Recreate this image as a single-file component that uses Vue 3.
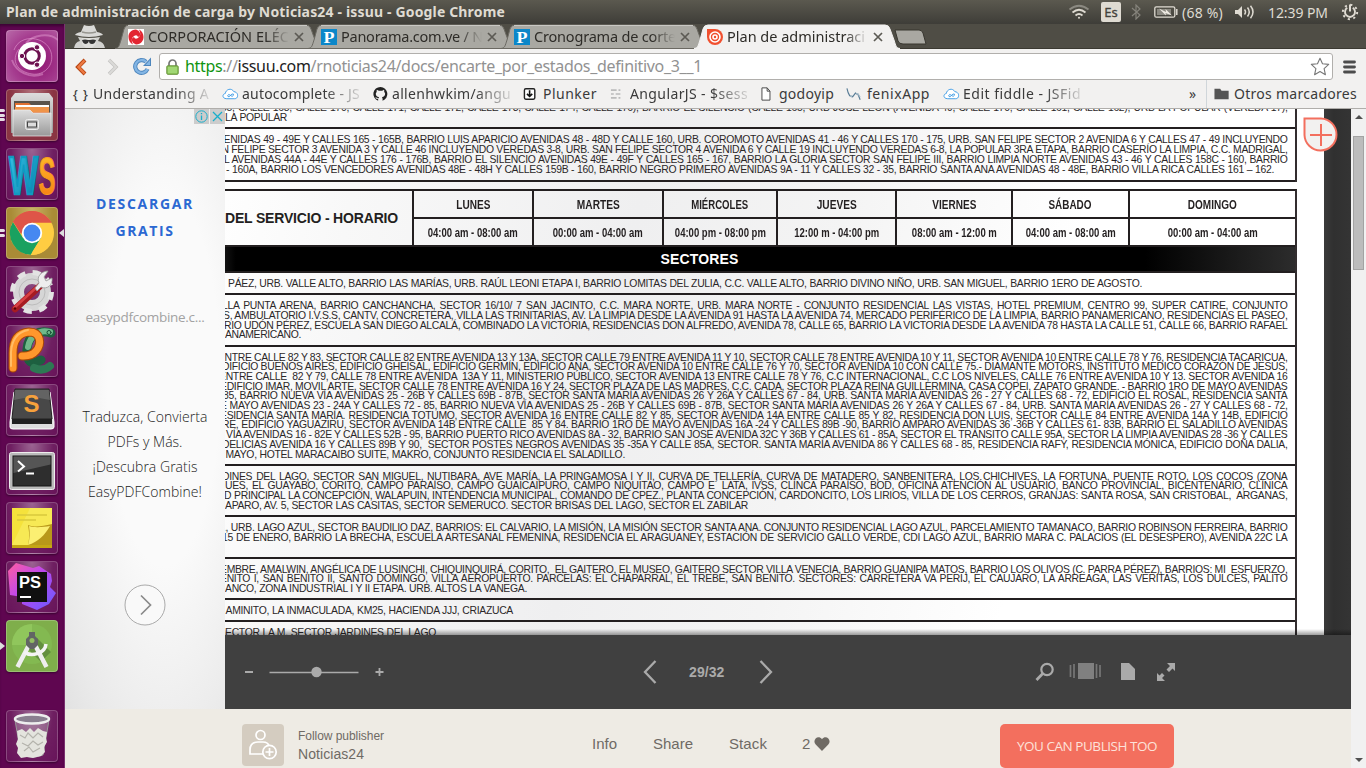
<script setup>
// Makes a line of text take exactly the given width: by letter spacing,
// by word spacing (.words) or by condensing the glyphs (.scale).
const vFit = {
  mounted(el, { value, modifiers }) {
    if (!value) return
    const natural = el.getBoundingClientRect().width
    const n = el.textContent.length
    if (modifiers.scale) {
      el.style.transform = `scaleX(${value / natural})`
      return
    }
    if (modifiers.words) {
      const base = -0.3
      const gaps = el.textContent.split(' ').length - 1
      const rest = value - natural - base * n
      const ws = Math.max(rest / gaps, -0.6)
      el.style.wordSpacing = ws + 'px'
      el.style.letterSpacing = (value - natural - ws * gaps) / n + 'px'
      return
    }
    el.style.letterSpacing = (value - natural) / n + 'px'
  },
}

const tabs = [
  { title: 'CORPORACIÓN ELÉC', w: 141, icon: 'corpo' },
  { title: 'Panorama.com.ve / N', w: 142, icon: 'pan' },
  { title: 'Cronograma de corte', w: 142, icon: 'pan' },
  { title: 'Plan de administraci', w: 138, icon: 'issuu', active: true },
]

const days = [
  ['LUNES', '04:00 am - 08:00 am', 34, 90],
  ['MARTES', '00:00 am - 04:00 am', 43, 90],
  ['MIÉRCOLES', '04:00 pm - 08:00 pm', 57, 91],
  ['JUEVES', '12:00 m - 04:00 pm', 40, 85],
  ['VIERNES', '08:00 am - 12:00 m', 44, 85],
  ['SÁBADO', '04:00 am - 08:00 am', 43, 90],
  ['DOMINGO', '00:00 am - 04:00 am', 49, 90],
]

// Each line: text, left edge and right edge inside the page column.
const R = 1062.5
const before = [
  { k: 'a', lines: [
    ['65, CALLE 168, CALLE 170, CALLE 171, CALLE 172, CALLE 173, CALLE 174, CALLE 176), BARRIO EL SILENCIO (CALLE 165, URB JOSÉ LEÓN (AVENIDA 49, CALLE 170, CALLE 161, CALLE 162), URB LA POPULAR (VEREDA 17),', -4, R],
    ['LA POPULAR', 0, 62],
  ] },
  { k: 'b', lines: [
    ['ENIDAS 49 - 49E Y CALLES 165 - 165B, BARRIO LUIS APARICIO AVENIDAS 48 - 48D Y CALLE 160, URB. COROMOTO AVENIDAS 41 - 46 Y CALLES 170 - 175, URB. SAN FELIPE SECTOR 2 AVENIDA 6 Y CALLES 47 - 49 INCLUYENDO', -1.5, R],
    ['N FELIPE SECTOR 3 AVENIDA 3 Y CALLE 46 INCLUYENDO VEREDAS 3-8, URB. SAN FELIPE SECTOR 4 AVENIDA 6 Y CALLE 19 INCLUYENDO VEREDAS 6-8, LA POPULAR 3RA ETAPA, BARRIO CASERÍO LA LIMPIA, C.C. MADRIGAL,', -3.5, R],
    ['L AVENIDAS 44A - 44E Y CALLES 176 - 176B, BARRIO EL SILENCIO AVENIDAS 49E - 49F Y CALLES 165 - 167, BARRIO LA GLORIA SECTOR SAN FELIPE III, BARRIO LIMPIA NORTE AVENIDAS 43 - 46 Y CALLES 158C - 160, BARRIO', -1, R],
    ['- 160A, BARRIO LOS VENCEDORES AVENIDAS 48E - 48H Y CALLES 159B - 160, BARRIO NEGRO PRIMERO AVENIDAS 9A - 11 Y CALLES 32 - 35, BARRIO SANTA ANA AVENIDAS 48 - 48E, BARRIO VILLA RICA CALLES 161 – 162.', 1, 1049],
  ] },
]
const after = [
  { k: 'c', lines: [
    ['PÁEZ, URB. VALLE ALTO, BARRIO LAS MARÍAS, URB. RAÚL LEONI ETAPA I, BARRIO LOMITAS DEL ZULIA, C.C. VALLE ALTO, BARRIO DIVINO NIÑO, URB. SAN MIGUEL, BARRIO 1ERO DE AGOSTO.', 3, 917],
  ] },
  { k: 'd', lines: [
    ['LLA PUNTA ARENA, BARRIO CANCHANCHA, SECTOR 16/10/ 7 SAN JACINTO, C.C. MARA NORTE, URB. MARA NORTE - CONJUNTO RESIDENCIAL LAS VISTAS, HOTEL PREMIUM, CENTRO 99, SUPER CATIRE, CONJUNTO', -3, R],
    ['S, AMBULATORIO I.V.S.S, CANTV, CONCRETERA, VILLA LAS TRINITARIAS, AV. LA LIMPIA DESDE LA AVENIDA 91 HASTA LA AVENIDA 74, MERCADO PERIFÉRICO DE LA LIMPIA, BARRIO PANAMERICANO, RESIDENCIAS EL PASEO,', -2, R],
    ['RIO UDÓN PÉREZ, ESCUELA SAN DIEGO ALCALÁ, COMBINADO LA VICTORIA, RESIDENCIAS DON ALFREDO, AVENIDA 78, CALLE 65, BARRIO LA VICTORIA DESDE LA AVENIDA 78 HASTA LA CALLE 51, CALLE 66, BARRIO RAFAEL', -1, R],
    ['ANAMERICANO.', 0, 76],
  ] },
  { k: 'e', lines: [
    ['NTRE CALLE 82 Y 83, SECTOR CALLE 82 ENTRE AVENIDA 13 Y 13A, SECTOR CALLE 79 ENTRE AVENIDA 11 Y 10, SECTOR CALLE 78 ENTRE AVENIDA 10 Y 11, SECTOR AVENIDA 10 ENTRE CALLE 78 Y 76, RESIDENCIA TACARICUA,', -0.5, R],
    ['DIFICIO BUENOS AIRES, EDIFICIO GHEISAL, EDIFICIO GERMÍN, EDIFICIO ANA, SECTOR AVENIDA 10 ENTRE CALLE 76 Y 70, SECTOR AVENIDA 10 CON CALLE 75.- DIAMANTE MOTORS, INSTITUTO MEDICO CORAZÓN DE JESÚS,', -3, R],
    ['ENTRE CALLE  82 Y 79, CALLE 78 ENTRE AVENIDA  13A Y 11, MINISTERIO PÚBLICO, SECTOR AVENIDA 13 ENTRE CALLE 78 Y 76, C.C INTERNACIONAL, C.C LOS NIVELES, CALLE 76 ENTRE AVENIDA 10 Y 13. SECTOR AVENIDA 16', -6, R],
    ['EDIFICIO IMAR, MOVIL ARTE, SECTOR CALLE 78 ENTRE AVENIDA 16 Y 24, SECTOR PLAZA DE LAS MADRES, C.C. CADA, SECTOR PLAZA REINA GUILLERMINA, CASA COPEI, ZAPATO GRANDE. - BARRIO 1RO DE MAYO AVENIDAS', -5, R],
    ['85, BARRIO NUEVA VÍA AVENIDAS 25 - 26B Y CALLES 69B - 87B, SECTOR SANTA MARÍA AVENIDAS 26 Y 26A Y CALLES 67 - 84, URB. SANTA MARÍA AVENIDAS 26 - 27 Y CALLES 68 - 72, EDIFICIO EL ROSAL, RESIDENCIA SANTA', -2, R],
    ['E MAYO AVENIDAS 23 - 24A Y CALLES 72 - 85, BARRIO NUEVA VÍA AVENIDAS 25 - 26B Y CALLES 69B - 87B, SECTOR SANTA MARÍA AVENIDAS 26 Y 26A Y CALLES 67 - 84, URB. SANTA MARÍA AVENIDAS 26 - 27 Y CALLES 68 - 72,', -5, R],
    ['ESIDENCIA SANTA MARÍA. RESIDENCIA TOTUMO, SECTOR AVENIDA 16 ENTRE CALLE 82 Y 85, SECTOR AVENIDA 14A ENTRE CALLE 85 Y 82, RESIDENCIA DON LUIS, SECTOR CALLE 84 ENTRE AVENIDA 14A Y 14B, EDIFICIO', -5, R],
    ['RE, EDIFICIO YAGUAZIRU, SECTOR AVENIDA 14B ENTRE CALLE  85 Y 84. BARRIO 1RO DE MAYO AVENIDAS 16A -24 Y CALLES 89B -90, BARRIO AMPARO AVENIDAS 36 -36B Y CALLES 61- 83B, BARRIO EL SALADILLO AVENIDAS', -3, R],
    ['VÍA AVENIDAS 16 - 82E Y CALLES 52B - 95, BARRIO PUERTO RICO AVENIDAS 8A - 32, BARRIO SAN JOSÉ AVENIDA 32C Y 36B Y CALLES 61 - 85A, SECTOR EL TRÁNSITO CALLE 95A, SECTOR LA LIMPIA AVENIDAS 28 -36 Y CALLES', 1, R],
    ['DELICIAS AVENIDA 16 Y CALLES 89B Y 90,  SECTOR POSTES NEGROS AVENIDAS 35 -35A Y CALLE 85A, SECTOR. SANTA MARÍA AVENIDA 86 Y CALLES 68 - 85, RESIDENCIA RAFY, RESIDENCIA MÓNICA, EDIFICIO DOÑA DALIA,', -3, R],
    ['MAYO, HOTEL MARACAIBO SUITE, MAKRO, CONJUNTO RESIDENCIA EL SALADILLO.', 0.5, 400],
  ] },
  { k: 'f', lines: [
    ['DINES DEL LAGO, SECTOR SAN MIGUEL, NUTIBARA, AVE MARÍA, LA PRINGAMOSA I Y II, CURVA DE TELLERÍA, CURVA DE MATADERO, SANBENITERA, LOS CHICHIVES, LA FORTUNA, PUENTE ROTO, LOS COCOS (ZONA', -3, R],
    ['UES, EL GUAYABO, CORITO, CAMPO PARAÍSO, CAMPO GUAICAIPURO, CAMPO NIQUITAO, CAMPO E´ LATA, IVSS, CLÍNCA PARAÍSO, BOD, OFICINA ATENCIÓN AL USUARIO, BANCO PROVINCIAL, BICENTENARIO, CLÍNICA', 0, R],
    ['D PRINCIPAL LA CONCEPCIÓN, WALAPUIN, INTENDENCIA MUNICIPAL, COMANDO DE CPEZ., PLANTA CONCEPCIÓN, CARDONCITO, LOS LIRIOS, VILLA DE LOS CERROS, GRANJAS: SANTA ROSA, SAN CRISTOBAL,  ARGANAS,', -1, R],
    ['APARO, AV. 5, SECTOR LAS CASITAS, SECTOR SEMERUCO. SECTOR BRISAS DEL LAGO, SECTOR EL ZABILAR', 0, 523],
  ] },
  { k: 'g', lines: [
    ['., URB. LAGO AZUL, SECTOR BAUDILIO DAZ, BARRIOS: EL CALVARIO, LA MISIÓN, LA MISIÓN SECTOR SANTA ANA. CONJUNTO RESIDENCIAL LAGO AZUL, PARCELAMIENTO TAMANACO, BARRIO ROBINSON FERREIRA, BARRIO', -2, R],
    ['15 DE ENERO, BARRIO LA BRECHA, ESCUELA ARTESANAL FEMENINA, RESIDENCIA EL ARAGUANEY, ESTACIÓN DE SERVICIO GALLO VERDE, CDI LAGO AZUL, BARRIO MARA C. PALACIOS (EL DESESPERO), AVENIDA 22C LA', -3, R],
  ] },
  { k: 'h', lines: [
    ['EMBRE, AMALWIN, ANGÉLICA DE LUSINCHI, CHIQUINQUIRÁ, CORITO,  EL GAITERO, EL MUSEO, GAITERO SECTOR VILLA VENECIA, BARRIO GUANIPA MATOS, BARRIO LOS OLIVOS (C. PARRA PÉREZ), BARRIOS: MI  ESFUERZO,', -5, R],
    ['ENITO I, SAN BENITO II, SANTO DOMINGO, VILLA AEROPUERTO. PARCELAS: EL CHAPARRAL, EL TREBE, SAN BENITO. SECTORES: CARRETERA VA PERIJ, EL CAUJARO, LA ARREAGA, LAS VERITAS, LOS DULCES, PALITO', -5, R],
    ['ANCO, ZONA INDUSTRIAL I Y II ETAPA. URB. ALTOS LA VANEGA.', 0, 302],
  ] },
  { k: 'i', lines: [['AMINITO, LA INMACULADA, KM25, HACIENDA JJJ, CRIAZUCA', 0.5, 288]] },
  { k: 'j', lines: [['ECTOR LA M, SECTOR JARDINES DEL LAGO', 0, 211]] },
]
</script>

<template>
  <div class="desk">
    <!-- system panel -->
    <header class="panel">
      <span v-fit="499" class="wtitle">Plan de administración de carga by Noticias24 - issuu - Google Chrome</span>
      <div class="tray">
        <svg width="22" height="16" viewBox="0 0 22 16" fill="none" stroke="#dfdbd2" stroke-width="1.7">
          <path d="M1.5 5.5Q11-2 20.500 5.500" stroke="#8b8981" /><path d="M4.500 8.500Q11 3 17.500 8.500" /><path d="M7.500 11.500Q11 8.500 14.500 11.500" /><circle cx="11" cy="13.800" r="1" fill="#dfdbd2" stroke="none" />
        </svg>
        <b class="es">Es</b>
        <svg class="bt" width="10" height="16" viewBox="0 0 10 16" fill="none" stroke="#85837b" stroke-width="1.200"><path d="M1 4l8 7-4 4V1l4 4-8 7" /></svg>
        <svg class="bat" width="24" height="12" viewBox="0 0 24 12" fill="none" stroke="#dfdbd2" stroke-width="1.300">
          <rect x=".8" y=".8" width="20" height="10.400" rx="1.500" /><path d="M22.800 3v6" stroke-width="1.500" /><rect x="3" y="3" width="14" height="6" fill="#8b8981" stroke="none" /><path d="M5 2.500L12 6l-.5-3L18 9.500 11.500 7l.5 2.500z" fill="#eeeae2" stroke="none" />
        </svg>
        <span v-fit="41" class="pct">(68 %)</span>
        <svg class="vol" width="20" height="14" viewBox="0 0 20 14" fill="none" stroke="#dfdbd2" stroke-width="1.500"><path d="M0 5h3l4-4v12L3 9H0z" fill="#dfdbd2" stroke="none" /><path d="M9.500 4.500q2 2.500 0 5M12.500 2.500q3.500 4.500 0 9M15.500 .8q5 6.200 0 12.400" /></svg>
        <span v-fit="60" class="clock">12:39 PM</span>
        <svg class="gear" width="18" height="18" viewBox="0 0 18 18" fill="none" stroke="#dfdbd2"><circle cx="9" cy="9" r="7.200" stroke-width="1.900" stroke-dasharray="2.200 3.450" /><path d="M6.200 4.800a5 5 0 1 0 5.600 0" stroke-width="1.900" /><path d="M9 1.500v7" stroke-width="2" /></svg>
      </div>
    </header>

    <div class="main">
      <!-- launcher -->
      <nav class="launcher">
        <div class="tile t-ubuntu">
          <svg viewBox="0 0 52 52"><path d="M8 20C14 3 40 6 45 22c4 14-8 24-19 22-14-2-22-13-13-25" fill="none" stroke="#e9a5d8" stroke-opacity=".55" /><path d="M52 10C43 2 27 5 20 13M6 30c4 12 18 19 31 14" fill="none" stroke="#e9a5d8" stroke-opacity=".45" stroke-width="2" /><circle cx="26" cy="26" r="14" fill="#fff" /><circle cx="26" cy="26" r="7.300" fill="none" stroke="#6d1150" stroke-width="3" /><g fill="#6d1150" stroke="#fff"><circle cx="16" cy="26" r="2.700" /><circle cx="31" cy="17.300" r="2.700" /><circle cx="31" cy="34.700" r="2.700" /></g></svg>
        </div>
        <div class="tile t-files"><i class="pip p1"></i><i class="pip p2"></i><i class="pip p3"></i>
          <svg viewBox="0 0 52 52"><defs><linearGradient id="cab" x2="0" y2="1"><stop stop-color="#ddd" /><stop offset="1" stop-color="#999" /></linearGradient></defs><path d="M9 4h34l4 5v35H5V9z" fill="url(#cab)" /><path d="M8 12h36v12H8z" fill="#5a534b" /><path d="M9 14h14l2 2h18v8H9z" fill="#e27131" /><path d="M10 16h33v2H10z" fill="#fff" /><path d="M9 18h34v5H9z" fill="#ef9449" /><path d="M7 21h17l3 3h18v23H7z" fill="url(#cab)" stroke="#eee" stroke-width=".7" /><rect x="19.500" y="30.500" width="13" height="10" rx="2" fill="#bbb" stroke="#eee" /><rect x="21.500" y="33" width="9" height="5" fill="#ddd" stroke="#444" /></svg>
        </div>
        <div class="tile">
          <svg viewBox="0 0 52 52"><defs><linearGradient id="wb" x2="1" y2="1"><stop stop-color="#3ac9ea" /><stop offset="1" stop-color="#0579a8" /></linearGradient><linearGradient id="wo" x2="0" y2="1"><stop stop-color="#ffc52c" /><stop offset="1" stop-color="#f57811" /></linearGradient></defs><text x="3" y="45.500" font-size="54" font-weight="bold" textLength="29" lengthAdjust="spacingAndGlyphs" fill="url(#wb)" stroke="#0e9bc2" stroke-width="2.500">W</text><text x="32.500" y="45.500" font-size="52" font-weight="bold" textLength="17" lengthAdjust="spacingAndGlyphs" fill="url(#wo)" stroke="#f99b20">S</text></svg>
        </div>
        <div class="tile t-chrome"><i class="pip p4"></i><i class="pip p5"></i><i class="arrow-r"></i>
          <svg viewBox="0 0 52 52"><circle cx="26" cy="26" r="22" fill="#ffcd42" /><path d="M26 26L6.900 15A22 22 0 0 1 45 15H26z" fill="#de5548" /><path d="M26 26v22A22 22 0 0 1 6.900 15L17 31z" fill="#1aa160" /><path d="M24.500 48L35 31 26 26 16 31z" fill="#1aa160" /><path d="M24.500 48L35 31l1-14h9.500A22 22 0 0 1 24.500 48z" fill="#ffcd42" /><path d="M26 15.800h19.800l-3-4A22 22 0 0 0 7 14.800L15 27z" fill="#de5548" /><circle cx="26" cy="26" r="10.200" fill="#fff" /><circle cx="26" cy="26" r="8.400" fill="#4688f1" /></svg>
        </div>
        <div class="tile">
          <svg viewBox="0 0 52 52"><circle cx="26" cy="26" r="13.500" fill="none" stroke="#d6d6d6" stroke-width="11" /><circle cx="26" cy="26" r="19.500" fill="none" stroke="#e3e3e3" stroke-width="5" stroke-dasharray="8 7.320" /><circle cx="26" cy="26" r="13" fill="none" stroke="#bcbcbc" /><path d="M34 20L9 43" stroke="#a61b22" stroke-width="6.500" stroke-linecap="round" /><path d="M32 20L8.500 41.500" stroke="#d84144" stroke-width="2.500" stroke-linecap="round" /><path d="M29 22l4-5c-3-7 3-12 9-12l-4 6 2 4 6-3c1 7-5 12-11 9l-4 4z" fill="#eee" stroke="#999" stroke-width=".8" /><circle cx="9" cy="42.500" r="1.200" fill="#500" /></svg>
        </div>
        <div class="tile">
          <svg viewBox="0 0 52 52" fill="none" stroke-linecap="round"><path d="M45 8C33 4 22 10 21 24s5 16 14 11" stroke="#1d6040" stroke-width="9" /><path d="M44 7C33 4 24 11 22 22" stroke="#6fb98a" stroke-width="6" /><path d="M28 43q9 4 16-2" stroke="#2d7953" stroke-width="8" /><path d="M7 43V28C7 14 13 8 23 7c12 0 13 12 7 19-5 6-12 5-14 5" stroke="#a64606" stroke-width="9" /><path d="M7 43V28C7 14 13 8 23 7c12 0 13 12 7 19-5 6-12 5-14 5" stroke="#ff972d" stroke-width="7" /><path d="M5 41V27C6 13 12 7 22 5" stroke="#ffbd66" stroke-width="2" /><circle cx="43" cy="7.500" r="2" fill="#6fb98a" stroke="#174d35" /></svg>
        </div>
        <div class="tile">
          <svg viewBox="0 0 52 52"><path d="M8 8h36l4 30v5q0 2-3 2H7q-3 0-3-2v-5z" fill="#ddd" stroke="#fff" /><path d="M9 5h34l3 30H6z" fill="#484848" stroke="#222" /><path d="M6 35h40v5H6z" fill="#202020" /><path d="M9 6h34l1 10q-19-5-36 0z" fill="#777" opacity=".6" /><text x="17.500" y="28" font-size="24" font-weight="bold" textLength="16" lengthAdjust="spacingAndGlyphs" fill="#f6a13c">S</text></svg>
        </div>
        <div class="tile">
          <svg viewBox="0 0 52 52"><rect x="3.500" y="9.500" width="45" height="37" rx="2" fill="#bbb" stroke="#eee" /><rect x="7" y="13" width="38" height="30" fill="#2e2e2e" stroke="#151515" /><path d="M7.500 13.500h37v8L7.500 30z" fill="#555" /><path d="M12 18l6 5.500-6 5M20 30.500h8" fill="none" stroke="#fff" stroke-width="2" /></svg>
        </div>
        <div class="tile">
          <svg viewBox="0 0 52 52"><path d="M6 8h40v38H6z" fill="#c5a614" /><path d="M6 6h40v37H6z" fill="#f7e955" /><path d="M6 6h18L6 43z" fill="#f4dc24" opacity=".5" /><path d="M11 13h30M11 18h19" stroke="#d9c93d" stroke-width="1.500" /><path d="M22 43c2-8 1-14 0-20 8 3 14 1 24-1v21z" fill="#b8981a" /><path d="M22 43c2-6 2-13 1-19 6 2 14 1 21 0C39 33 32 40 22 43z" fill="#fbef72" /></svg>
        </div>
        <div class="tile">
          <svg viewBox="0 0 52 52"><defs><linearGradient id="ps" x1="0" x2="1" y1="0" y2="1"><stop stop-color="#ff5ea0" /><stop offset=".45" stop-color="#bd47ef" /><stop offset="1" stop-color="#635cff" /></linearGradient></defs><path d="M2 10L10 2l17 5 6-2 12 8 1 7-2 6 6 6-7 11-12 6-15-6v-7L4 34z" fill="url(#ps)" /><rect x="11" y="11" width="30" height="30" fill="#101010" /><text x="13" y="26.500" font-size="16" font-weight="bold" textLength="22" lengthAdjust="spacingAndGlyphs" fill="#fff">PS</text><path d="M14 36h11" stroke="#fff" stroke-width="2" /></svg>
        </div>
        <div class="tile t-android"><i class="arrow-l"></i>
          <svg viewBox="0 0 52 52"><circle cx="26" cy="24" r="20" fill="#83b951" /><path d="M6 25a20 20 0 0 1 20-21v21z" fill="#90c65c" /><path d="M31 18l14 14-10 10-13-13z" fill="#638f3f" /><path d="M23 25L11.500 47M29 25l11.500 22" stroke="#eee" stroke-width="4.500" /><path d="M18 32c7 5 21 2 22-8" fill="none" stroke="#f4f4f4" stroke-width="3.500" /><path d="M23 12h6v4l3 3v6l-4 4h-4l-4-4v-6l3-3z" fill="#626564" /><circle cx="26" cy="20.500" r="2.500" fill="#93be62" /></svg>
        </div>
        <div class="tile t-trash">
          <svg viewBox="0 0 52 52"><path d="M9 10l6 35q11 4 22 0l6-35" fill="#ccc" fill-opacity=".3" stroke="#999" /><path d="M11 21l5-2 4 3 4-4 4 4 4-4 5 3 4 1-1 6 1 4-3 5 1 5-4 4-8 2-6-1-6 1-4-5 1-5-2-4 2-5z" fill="#e4e4de" /><path d="M14 25l5 3 3-5 5 5 5-5 5 4M16 33l6 3 5-5 5 4 5-3M18 41l5-4 4 5 7-4" fill="none" stroke="#b4b3ac" stroke-width="1.200" /><ellipse cx="26" cy="9" rx="17" ry="4.500" fill="#8a7f90" stroke="#eee" stroke-width="2.500" /></svg>
        </div>
      </nav>

      <div class="browser">
        <div class="tabstrip">
          <svg class="incog" width="36" height="24" viewBox="0 0 36 24"><path d="M10 8l3-7q5 2 10 0l3 7q5 1 6 3-14 4-28 0 1-2 6-3z" fill="#d9d9d7" /><path d="M11 8q7 2 14 0" stroke="#96958f" stroke-width="1.500" fill="none" /><path d="M3 24q1-6 6-7l-2-4q11 2 22 0l-2 4q6 1 7 7z" fill="#d2d2cf" /><path d="M11 14h14v6l-4 4h-6l-4-4z" fill="#dededb" /><path d="M11 16q3-1 6 0h2q3-1 6 0-1 4-4 4-3 0-3-3-1 3-3 3-3 0-4-4z" fill="#333" /></svg>
          <div v-for="t in tabs" :key="t.title" class="tab" :class="{ active: t.active }">
            <svg class="tabshape" width="206" height="25" viewBox="0 0 206 25"><path d="M0 24.500C4 24 4 22 6 16L9 5Q10 1 14 1H191Q195 1 196 5L200 16C202 22 202 24 206 24.500z" :fill="t.active ? '#f2f1f0' : '#a9a8a2'" :stroke="t.active ? '#f2f1f0' : '#6b6962'" /><path v-if="!t.active" d="M13 1.500H192" stroke="#c9c8c4" /></svg>
            <svg v-if="t.icon === 'corpo'" class="fav" viewBox="0 0 16 16"><path d="M0 0h16v16H0z" fill="#fff" /><path d="M8 .5C-2 1-1 13 5 15.500q-3-6 1-8.500 3-2 4 1 3-1 2-4-1-3-4-3.500z" fill="#e32631" /><path d="M8 15.500c10-.5 9-12.500 3-15q3 6-1 8.500-3 2-4-1-3 1-2 4 1 3 4 3.500z" fill="#e32631" /></svg>
            <svg v-else-if="t.icon === 'pan'" class="fav" viewBox="0 0 16 16"><path d="M0 0h16v16H0z" fill="#0b87c9" /><text x="2.500" y="14" font-family="Liberation Serif" font-weight="bold" font-size="17" textLength="11" lengthAdjust="spacingAndGlyphs" fill="#fff">P</text></svg>
            <svg v-else class="fav" viewBox="0 0 16 16"><path d="M0 0h8a8 8 0 1 1-8 8z" fill="#f1502f" /><circle cx="8" cy="8" r="5" fill="none" stroke="#fff" stroke-width="1.600" /><circle cx="8" cy="8" r="2" fill="none" stroke="#fff" stroke-width="1.600" /></svg>
            <div class="tt"><span v-fit="t.w">{{ t.title }}</span></div>
            <svg class="x" width="10" height="10" viewBox="0 0 10 10" stroke="#5c5a54" stroke-width="1.700"><path d="M1 1l8 8M9 1L1 9" /></svg>
          </div>
          <svg class="newtab" width="33" height="16" viewBox="0 0 33 16"><path d="M1 1h24q3 0 4 3l3 11H9q-4 0-5-3z" fill="#a9a8a2" stroke="#38362f" /></svg>
        </div>

        <div class="toolbar">
          <svg class="back" width="12" height="18" viewBox="0 0 12 18" fill="none"><path d="M10 2L3 9l7 7" stroke="#b94613" stroke-width="4" /><path d="M9.500 2.500L3.500 9l6 6.500" stroke="#ed7a43" stroke-width="2.400" /></svg>
          <svg class="fwd" width="12" height="18" viewBox="0 0 12 18" fill="none"><path d="M2 2l7 7-7 7" stroke="#c4c3c1" stroke-width="3.500" /><path d="M2 2l7 7-7 7" stroke="#dbdad8" stroke-width="2" /></svg>
          <svg class="reload" width="19" height="19" viewBox="0 0 19 19" fill="none"><path d="M14.500 12A6.400 6.400 0 1 1 13 4.800" stroke="#4d86bd" stroke-width="4.200" /><path d="M18 .5V9H10z" fill="#4d86bd" /><path d="M14.500 12A6.400 6.400 0 1 1 13 4.800" stroke="#83b5e4" stroke-width="2.400" /><path d="M17 3v5h-4.500z" fill="#83b5e4" /></svg>
          <div class="omni">
            <svg width="13" height="16" viewBox="0 0 13 16"><path d="M3 8V4.500a3.500 3.500 0 0 1 7 0V8" fill="none" stroke="#777" stroke-width="1.700" /><rect x=".8" y="6.800" width="11.400" height="8.500" rx="1" fill="#8ecb5c" stroke="#68913c" /><path d="M2 9h9M2 11h9M2 13h9" stroke="#b5e48e" /></svg>
            <span v-fit="517" class="url"><span class="sec">https</span>://<span class="host">issuu.com</span>/rnoticias24/docs/encarte_por_estados_definitivo_3__1</span>
            <svg class="star" width="20" height="19" viewBox="0 0 20 19"><path d="M10 1.200l2.500 5.600 6.200.6-4.600 4.200 1.300 6.100-5.400-3.200-5.400 3.200 1.300-6.100L1.300 7.400l6.200-.6z" fill="#fff" stroke="#777" stroke-width="1.100" stroke-linejoin="round" /></svg>
          </div>
          <svg class="menu" width="13" height="14" viewBox="0 0 13 14" stroke="#4c4c4c" stroke-width="2.800" stroke-linecap="round"><path d="M1.500 2h10M1.500 7h10M1.500 12h10" /></svg>
        </div>

        <div class="marks">
          <div class="mk"><b class="braces">{ }</b><span v-fit="116" class="fade">Understanding A</span></div>
          <div class="mk"><svg class="ic" viewBox="0 0 18 16"><path d="M5 13C0 13 0 8 3.500 7.500 4 3 10 1 12.500 5.500 18 6 17.500 13 13.500 13z" fill="#fff" stroke="#3f9ce5" /><path d="M6 9.500q1-2 3 0t3 0-1.500-1.500L7.500 11Q6 11 6 9.500z" fill="none" stroke="#3f9ce5" /></svg><span v-fit="118" class="fade">autocomplete - JS</span></div>
          <div class="mk"><svg class="ic" viewBox="0 0 18 16"><path d="M9 .5a7.500 7.500 0 0 0-2.500 14.600v-2Q4 13.500 3.500 11.500l2 .5q.5.800 1.500.4l.5-1Q4 11 4 7.500l1-2q-.4-1 .2-2l2 1h3.500l2-1q.5 1 .2 2l1 2q0 3.500-3.400 3.900.7.600.7 2v1.700A7.500 7.500 0 0 0 9 .5z" fill="#222" /></svg><span v-fit="119" class="fade">allenhwkim/angu</span></div>
          <div class="mk"><svg class="ic" viewBox="0 0 18 16"><rect x="1.500" y="2.500" width="11" height="11" rx="1.500" fill="#fff" stroke="#222" stroke-width="1.500" /><path d="M7 4v6M4.200 7.800L7 10.500l2.800-2.700" fill="none" stroke="#111" stroke-width="1.700" /></svg><span v-fit="54">Plunker</span></div>
          <div class="mk"><svg class="ic" viewBox="0 0 18 16"><path d="M1 4h6m2 0h2M1 8h3m2 0h5M1 12h6m2 0h2" stroke="#bbb" stroke-width="1.800" /></svg><span v-fit="118" class="fade">AngularJS - $sess</span></div>
          <div class="mk"><svg class="ic ic18" viewBox="0 0 18 16"><path d="M1 1.500h5.500l3 3.500v9.500H1z" fill="#fff" stroke="#444" /><path d="M6.500 1.500V5h3" fill="none" stroke="#444" /></svg><span v-fit="55">godoyip</span></div>
          <div class="mk"><svg class="ic ic22" viewBox="0 0 18 16"><path d="M1 2q1 5 3 8l3 1 3-4 3 2 2 5" fill="none" stroke="#567a94" stroke-width="1.200" /><path d="M4 10l3-1-1 3zM10 7l3 0 3 5" fill="#a8bcc9" /></svg><span v-fit="63">fenixApp</span></div>
          <div class="mk"><svg class="ic" viewBox="0 0 18 16"><path d="M5 13C0 13 0 8 3.500 7.500 4 3 10 1 12.500 5.500 18 6 17.500 13 13.500 13z" fill="#fff" stroke="#3f9ce5" /><path d="M6 9.500q1-2 3 0t3 0-1.500-1.500L7.500 11Q6 11 6 9.500z" fill="none" stroke="#3f9ce5" /></svg><span v-fit="118" class="fade">Edit fiddle - JSFid</span></div>
          <div class="mk more"><span>»</span></div>
          <div class="mk others"><svg class="ic" viewBox="0 0 18 16"><path d="M.5 2.500h6l1.500 2h7.500v9H.5z" fill="#555" /></svg><span v-fit="123">Otros marcadores</span></div>
        </div>

        <div class="view">
          <div class="web">
            <div class="upper">
              <aside class="ad">
                <div class="adbtns">
                  <svg width="15" height="15" viewBox="0 0 15 15" fill="none" stroke="#19aecb"><circle cx="7.500" cy="7.500" r="5.700" /><path d="M7.500 6.500V11M7.500 4v1.200" stroke-width="1.300" /></svg>
                  <svg width="15" height="15" viewBox="0 0 15 15" stroke="#19aecb" stroke-width="1.300"><path d="M3 3l9 9M12 3l-9 9" /></svg>
                </div>
                <div class="cta"><span v-fit="98">DESCARGAR</span><br /><span v-fit="59">GRATIS</span></div>
                <div class="site"><span v-fit="119">easypdfcombine.c...</span></div>
                <div class="copy"><span v-fit="125">Traduzca, Convierta</span><br /><span v-fit="75">PDFs y Más.</span><br /><span v-fit="105">¡Descubra Gratis</span><br /><span v-fit="114">EasyPDFCombine!</span></div>
                <svg class="go" width="42" height="42" viewBox="0 0 42 42" fill="none"><circle cx="21" cy="21" r="20" fill="#f9f9f9" stroke="#aaa" /><path d="M17 11.500l9.500 9.500-9.500 9.500" stroke="#8a8a8a" stroke-width="1.700" /></svg>
              </aside>

              <section class="reader">
                <div class="stage">
                  <div class="sheet">
                    <div class="frame">
                      <div v-for="s in before" :key="s.k" class="blk" :class="'b-' + s.k">
                        <p v-for="l in s.lines" :key="l[0]" :style="{ marginLeft: l[1] + 'px' }"><span v-fit.words="l[2] - l[1]">{{ l[0] }}</span></p>
                      </div>
                    </div>
                    <div class="frame second">
                      <div class="hours">
                        <div class="hlabel"><span v-fit="173">DEL SERVICIO - HORARIO</span></div>
                        <div v-for="d in days" :key="d[0]" class="day">
                          <div><span v-fit.scale="d[2]">{{ d[0] }}</span></div>
                          <div class="hr"><span v-fit.scale="d[3]">{{ d[1] }}</span></div>
                        </div>
                      </div>
                      <div class="band"><span v-fit="78">SECTORES</span></div>
                      <div v-for="s in after" :key="s.k" class="blk" :class="'b-' + s.k">
                        <p v-for="l in s.lines" :key="l[0]" :style="{ marginLeft: l[1] + 'px' }"><span v-fit.words="l[2] - l[1]">{{ l[0] }}</span></p>
                      </div>
                    </div>
                  </div>
                  <div class="gutter"></div>
                  <svg class="clip" width="36" height="36" viewBox="0 0 36 36"><path d="M1.500 1.500H18A16 16 0 1 1 1.500 18z" fill="#f2f1f0" stroke="#f36f5e" stroke-width="2" /><path d="M18 7v22M7 18h22" stroke="#f36f5e" stroke-width="2" /></svg>
                </div>
                <div class="rbar">
                  <svg class="zoomer" width="140" height="14" viewBox="0 0 140 14" stroke="#aaa" fill="none"><path d="M0 7h8M130.500 7h8M134.500 3v8" stroke-width="1.800" /><path d="M24.500 7.500h89" stroke-width="1.300" /><circle cx="71.500" cy="7" r="5.200" fill="#aaa" stroke="none" /></svg>
                  <svg class="prev" width="14" height="24" viewBox="0 0 14 24"><path d="M12.500 1L2 12l10.500 11" fill="none" stroke="#aaa" stroke-width="2.300" /></svg>
                  <b v-fit="35.5" class="pg">29/32</b>
                  <svg class="next" width="14" height="24" viewBox="0 0 14 24"><path d="M1.500 1L12 12 1.500 23" fill="none" stroke="#aaa" stroke-width="2.300" /></svg>
                  <svg class="tools" width="142" height="20" viewBox="0 0 142 20"><g fill="none" stroke="#aaa"><circle cx="12" cy="7.500" r="5.700" stroke-width="2.200" /><path d="M7.800 11.500L1.500 18" stroke-width="2.700" /></g><path d="M35.500 3v12m3.500-13v14m22.500-14v14m3.500-13v12" stroke="#777" stroke-width="1.700" /><path d="M43 1h16v16H43z" fill="#808080" /><path d="M86 1h8l6 6v11H86z" fill="#aaa" /><g fill="#aaa"><path d="M132 1h8v8l-2.500-2.500-3.500 3.500-2.500-2.500 3.500-3.500zM122 19v-8l2.500 2.500 2.500-2.500 2.500 2.500-2.500 2.500L130 19z" /></g></svg>
                </div>
              </section>
            </div>
            <footer class="foot">
              <svg class="follow" width="42" height="42" viewBox="0 0 42 42"><rect width="42" height="42" rx="4" fill="#d4ccc0" /><g fill="none" stroke="#fff" stroke-width="1.700"><circle cx="18.500" cy="11" r="4.500" /><path d="M22 30H8v-4q0-8 8-8h5q5 0 6 4" /><circle cx="27.500" cy="28" r="6.700" fill="#d4ccc0" /><path d="M27.500 24v8M23.500 28h8" /></g></svg>
              <div class="pub"><span v-fit="86" class="p-s">Follow publisher</span><span v-fit="66">Noticias24</span></div>
              <div class="links"><span v-fit="25">Info</span><span v-fit="40">Share</span><span v-fit="38">Stack</span><span class="like">2<svg width="16" height="14" viewBox="0 0 17 14" preserveAspectRatio="none"><path d="M8.500 14L1.800 7.600C-2.500 3 4.500-3 8.500 2.200 12.500-3 19.500 3 15.200 7.600z" fill="#6f6a64" /></svg></span></div>
              <button class="publish"><span v-fit="140">YOU CAN PUBLISH TOO</span></button>
            </footer>
          </div>
          <div class="sbar"><i class="up"></i><i class="thumb"></i><i class="down"></i></div>
        </div>
      </div>
    </div>
  </div>
</template>

<style>
body { overflow: hidden; }
</style>

<style scoped>
* { box-sizing: border-box; }
p { margin: 0; }
svg { flex: none; display: block; }
span { display: inline-block; white-space: pre; flex: none; }
.desk { width: 1366px; height: 768px; display: flex; flex-direction: column; overflow: hidden; font-family: "Liberation Sans", Arial, sans-serif; }
.panel { height: 24px; flex: none; background: linear-gradient(#5b594f, #3e3d38); display: flex; align-items: center; justify-content: space-between; padding: 0 7px 0 6px; color: #dfdbd2; font: 14.500px "Noto Sans", sans-serif; }
.wtitle { font-weight: bold; font-size: 14px; line-height: 24px; }
.tray { display: flex; align-items: center; height: 24px; font-size: 14px; }
.es { width: 20px; height: 20px; background: #dfdbd2; color: #44423c; border-radius: 2px; margin-left: 11px; text-align: center; font: 13px/20px "Noto Sans", sans-serif; -webkit-text-stroke: .3px #44423c; }
.bt { margin-left: 10px; } .bat { margin-left: 13px; } .pct { margin-left: 4px; } .vol { margin-left: 12px; } .clock { margin-left: 13px; } .gear { margin-left: 13px; }
.main { flex: 1; display: flex; min-height: 0; }

.launcher { width: 65px; flex: none; background: #5f0650; border-right: 1px solid #7b3070; padding: 6px 0 6px 6px; display: flex; flex-direction: column; gap: 7px; box-shadow: inset 0 3px 3px -1px #3c0434; }
.tile { position: relative; width: 52px; height: 52px; flex: none; border-radius: 4px; border: 1px solid rgba(255,255,255,.22); background: radial-gradient(ellipse at 50% 0, rgba(255,255,255,.38), rgba(255,255,255,.1) 60%, rgba(255,255,255,.06)); box-shadow: 0 1px 2px rgba(0,0,0,.4); }
.tile > svg { width: 52px; height: 52px; margin: -1px; border-radius: 4px; }
.tile text { font-family: "Liberation Sans", sans-serif; }
.t-ubuntu { background: radial-gradient(circle at 60% 60%, #8e1270, #a53c8f 60%, #b868a8); }
.t-files { background: radial-gradient(ellipse at 50% 0, #b0707a, #8a3543 60%); }
.t-chrome { background: radial-gradient(ellipse at 50% 0, #c9b265, #a98b36 60%); }
.t-android { background: #7fae4b; }
.t-trash { margin-top: 31px; }
.pip { position: absolute; left: -7px; width: 5px; height: 3px; background: #e6dfe5; border-radius: 0 2px 2px 0; }
.p1 { top: 19px; } .p2 { top: 23.500px; } .p3 { top: 28px; } .p4 { top: 21px; } .p5 { top: 26px; }
.arrow-r { position: absolute; right: -7px; top: 21px; border: 4px solid transparent; border-right: 5px solid #ddd; border-left: 0; }
.arrow-l { position: absolute; left: -7px; top: 21px; border: 4px solid transparent; border-left: 5px solid #ddd; border-right: 0; }

.browser { flex: 1; display: flex; flex-direction: column; min-width: 0; background: #f2f1f0; }
.tabstrip { height: 25px; flex: none; background: #4f4d45; display: flex; align-items: flex-start; border-bottom: 1px solid #3b3931; position: relative; font: 14.500px "Noto Sans", sans-serif; color: #2e2c28; }
.incog { margin: 0 8px 0 6px; }
.tab { position: relative; z-index: 0; width: 193px; height: 25px; display: flex; align-items: center; padding-left: 13px; flex: none; }
.tab.active { z-index: 2; }
.tabshape { position: absolute; left: 0; top: 0; z-index: -1; }
.fav { width: 16px; height: 16px; margin-right: 4px; }
.tt { width: 142px; overflow: hidden; height: 24px; line-height: 23px; -webkit-mask: linear-gradient(90deg, #000 118px, transparent 141px); mask: linear-gradient(90deg, #000 118px, transparent 141px); }
.x { margin-left: 4px; }
.newtab { margin: 5px 0 0 7px; }
.toolbar { height: 31px; flex: none; display: flex; align-items: center; padding: 4px 10px 0 10px; }
.fwd { margin-left: 20px; } .reload { margin-left: 14px; }
.omni { margin-left: 7px; width: 1176px; height: 27px; background: #fff; border: 1px solid #b1afac; border-radius: 3px; display: flex; align-items: center; padding: 0 2px 0 6px; }
.url { margin-left: 6px; font: 16px/25px "Noto Sans", sans-serif; color: #929292; }
.url span { display: inline; }
.url .sec { color: #109410; } .url .host { color: #222; }
.star { margin-left: auto; }
.menu { margin-left: 10px; }
.marks { height: 29px; flex: none; border-bottom: 1px solid #b0aeab; padding-left: 8px; display: grid; grid-template-columns: 149px 150px 151px 87px 151px 85px 97px 246px 17px 1fr; font: 14px "Noto Sans", sans-serif; color: #3a3a3a; }
.mk { display: flex; align-items: center; min-width: 0; }
.mk span { line-height: 26px; }
.ic { width: 17px; height: 16px; margin-right: 3px; }
.ic18 { margin-right: 1px; } .ic22 { margin-right: 4px; }
.braces { width: 20px; font-size: 12.500px; font-weight: 500; letter-spacing: 1px; }
.fade { -webkit-mask: linear-gradient(90deg, #000 82px, rgba(0,0,0,.15)); mask: linear-gradient(90deg, #000 82px, rgba(0,0,0,.15)); }
.others { border-left: 1px solid #d0d6da; padding-left: 7px; }

.view { flex: 1; display: flex; min-height: 0; }
.web { width: 1286px; display: flex; flex-direction: column; }
.upper { height: 600px; flex: none; display: flex; }
.ad { width: 160px; flex: none; background: radial-gradient(ellipse at 62% 45%, #fafafa 40%, #e9e9e9 85%, #e2e2e2); text-align: center; font-family: "Open Sans", sans-serif; display: flex; flex-direction: column; align-items: center; }
.adbtns { align-self: flex-end; display: flex; gap: 1px; height: 15px; }
.adbtns svg { background: #ccc; }
.cta { margin-top: 66px; font-weight: bold; font-size: 14px; line-height: 27px; color: #2b68d2; }
.site { margin-top: 64px; font-size: 13.500px; line-height: 18px; color: #a2a2a2; }
.copy { margin-top: 78px; font-size: 14px; font-weight: 300; line-height: 25px; color: #222; }
.go { margin-top: 80px; margin-right: 1px; }
.reader { width: 1126px; flex: none; display: flex; flex-direction: column; }
.stage { height: 526px; position: relative; display: flex; overflow: hidden; }
.stage::after { content: ""; position: absolute; left: 0; right: 0; bottom: 0; height: 6px; background: linear-gradient(transparent, rgba(0,0,0,.38)); }
.sheet { width: 1099px; flex: none; overflow: hidden; background: linear-gradient(102deg, #fff 0, #f8f8f8 12%, #efeff0 36%, #f4f4f4 53%, #fff 73%); }
.gutter { flex: 1; background: linear-gradient(90deg, #3a3a3a, #303030 35%, #343434); }
.clip { position: absolute; left: 1078px; top: 8px; }
.frame { width: 1072px; border-right: 2px solid #322d2f; overflow: hidden; }
.second { margin-top: 7px; border-top: 2px solid #231f20; }
.blk { border-bottom: 2px solid #231f20; font-size: 10.400px; color: #2b2728; line-height: 9.710px; overflow: hidden; }
.blk p { white-space: nowrap; height: 9.710px; }
.b-a { height: 20px; } .b-a p:first-child { margin-top: -6px; }
.b-b { height: 53px; padding-top: 6px; line-height: 10px; } .b-b p { height: 10px; }
.b-c { height: 22px; padding-top: 5.500px; }
.b-d { height: 52px; padding-top: 6.200px; }
.b-e { height: 119px; padding-top: 5.500px; }
.b-f { height: 51px; padding-top: 5.500px; }
.b-g { height: 42px; padding-top: 6px; }
.b-h { height: 41px; padding-top: 5.500px; }
.b-i { height: 22px; padding-top: 5.500px; }
.b-j { height: 14px; padding-top: 6px; border-bottom: 0; }
.hours { height: 56px; border-bottom: 2px solid #231f20; display: grid; grid-template-columns: 187px 120px 130px 114px 119px 116px 117px 1fr; font-weight: bold; color: #231f20; }
.hlabel { line-height: 54px; font-size: 14px; display: flex; }
.day { border-left: 2px solid #231f20; font-size: 12px; text-align: center; }
.day div { height: 26px; line-height: 29px; display: flex; justify-content: center; }
.day div.hr { height: 28px; border-top: 2px solid #231f20; line-height: 28px; }
.band { height: 26px; line-height: 24px; border-bottom: 2px solid #231f20; background: linear-gradient(90deg, #111, #000 1%, #000 86%, #2c2c2c); color: #fff; font-weight: bold; font-size: 14px; padding-left: 435.500px; }
.rbar { height: 74px; background: #404040; display: flex; align-items: center; padding-left: 20px; color: #aaa; }
.prev { margin-left: 258px; } .pg { margin-left: 32px; font-size: 14px; display: inline-block; } .next { margin-left: 34px; } .tools { margin-left: 262px; }
.foot { flex: 1; background: #eeebe4; display: flex; align-items: flex-start; padding-left: 177px; color: #6f6a64; }
.follow { margin-top: 15px; }
.pub { margin: 19px 0 0 14px; width: 86px; display: flex; flex-direction: column; align-items: flex-start; font-size: 14px; line-height: 18px; }
.p-s { font-size: 12px; line-height: 17px; }
.links { margin: 25px 0 0 208px; width: 238px; display: flex; gap: 36px; font-size: 15px; line-height: 20px; }
.like { display: flex; align-items: center; gap: 4px; white-space: nowrap; margin-left: -1px; }
.publish { margin: 15px 0 0 170px; width: 174px; height: 44px; border: 0; padding: 0; border-radius: 5px; background: #f36f5e; color: #fde2da; font: 13.500px "Open Sans", sans-serif; }
.sbar { width: 15px; background: #f1f1f1; display: flex; flex-direction: column; align-items: center; }
.up { border: 4px solid transparent; border-bottom-color: #505050; border-top: 0; margin-top: 6px; }
.thumb { width: 11px; height: 134px; margin-top: 17px; background: #bcbcbc; border: 1px solid #a3a3a3; }
.down { border: 4px solid transparent; border-top-color: #505050; border-bottom: 0; margin-top: auto; margin-bottom: 6px; }
</style>
